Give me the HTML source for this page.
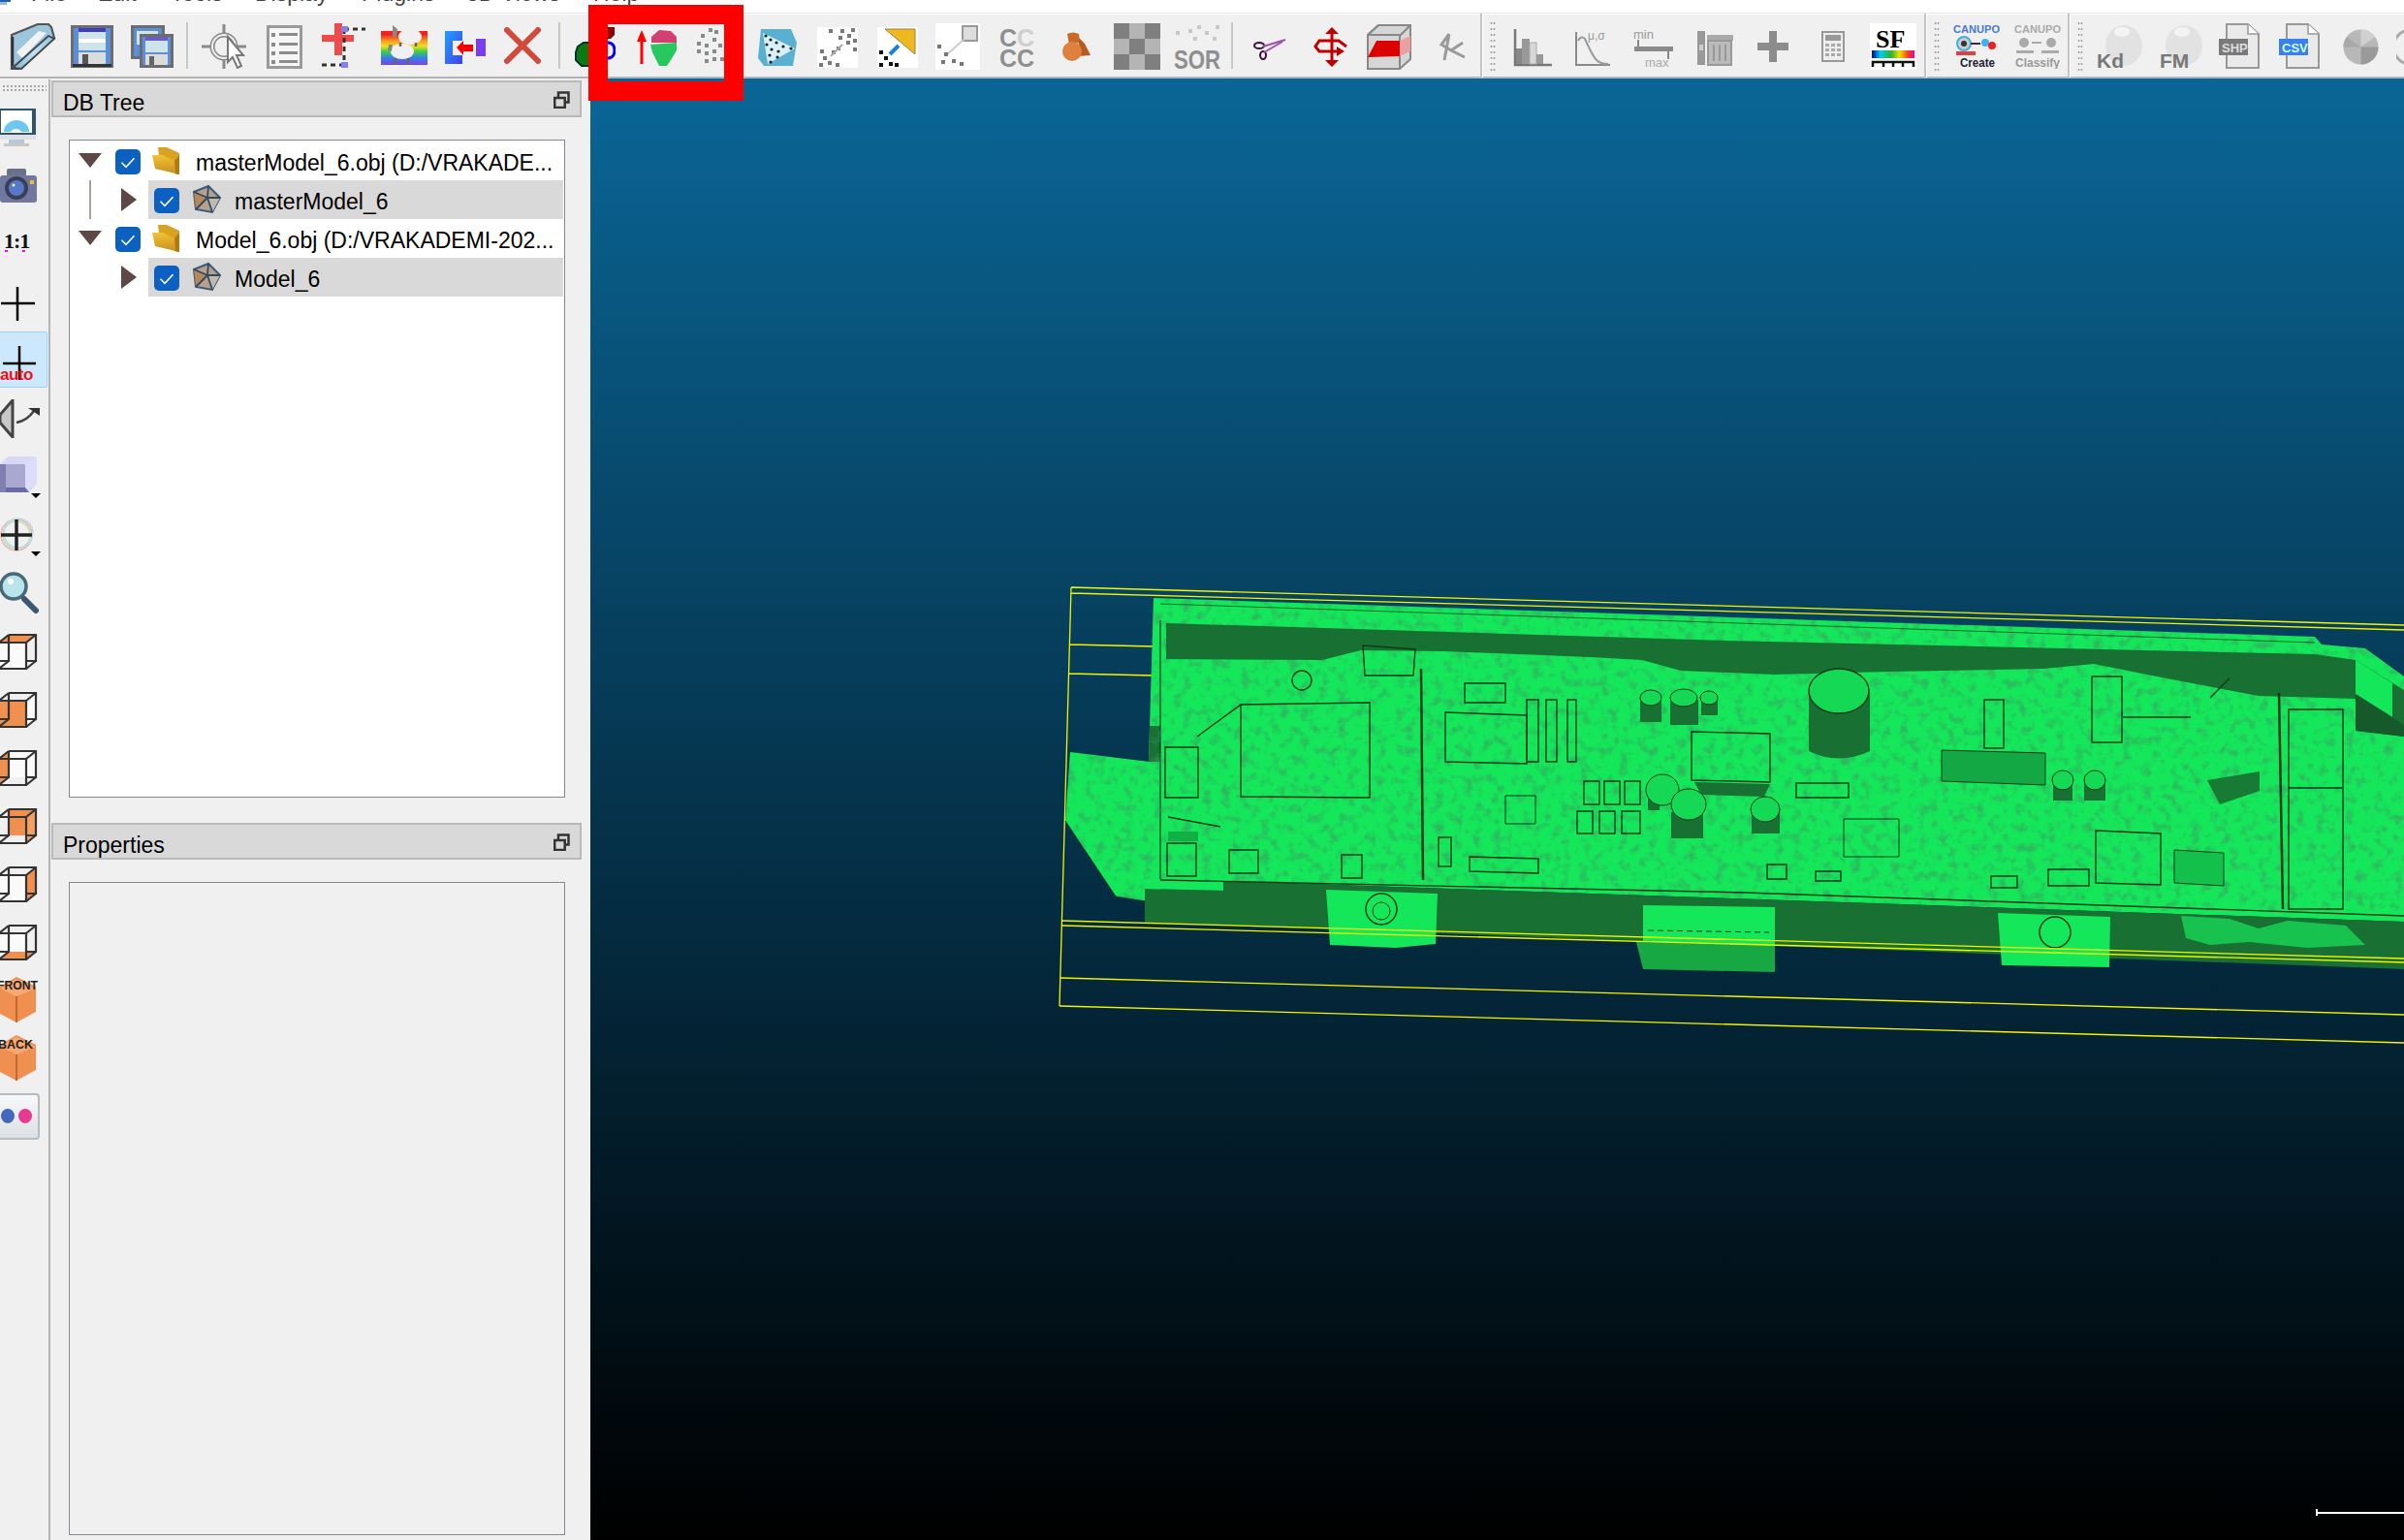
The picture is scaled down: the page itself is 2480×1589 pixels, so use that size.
<!DOCTYPE html>
<html><head><meta charset="utf-8">
<style>
*{margin:0;padding:0;box-sizing:border-box}
html,body{width:2480px;height:1589px;overflow:hidden;background:#f0f0f0;font-family:"Liberation Sans",sans-serif}
.a{position:absolute}
#menu{left:0;top:0;width:2480px;height:13px;background:#fff;overflow:hidden}
#menu span{position:absolute;top:-18px;font-size:23px;color:#444;line-height:23px}
#tb{left:0;top:13px;width:2480px;height:68px;background:#f0f0f0;border-top:1px solid #e6e6e6;box-shadow:inset 0 1px 0 #fff}
#tbline{left:0;top:79px;width:2480px;height:2px;background:#b4b4b4}
.sep{position:absolute;width:2px;background:#c8c8c8}
.tsep{position:absolute;width:3px;top:14px;height:66px;background:#c4c4c4;border-right:1px solid #fff}
.handle{position:absolute;width:6px;top:21px;height:53px;background-image:radial-gradient(circle,#a0a0a0 0.9px,transparent 1.2px);background-size:3px 6px}
#lsep{left:50px;top:82px;width:2px;height:1507px;background:#b4b4b4}
.dock{position:absolute;left:53px;width:547px;height:38px;background:#d9d9d9;border:2px solid #b9b9b9;font-size:23px;line-height:34px;padding-left:10px;padding-top:4px;color:#000}
.float{position:absolute;right:10px;top:9px;width:17px;height:18px}
#tree{left:71px;top:144px;width:512px;height:679px;background:#fff;border:1px solid #828790}
#props{left:71px;top:910px;width:512px;height:674px;background:#f0f0f0;border:1px solid #828790}
.row{position:absolute;left:0;width:510px;height:40px;font-size:23px;line-height:40px;white-space:nowrap}
.sel{position:absolute;left:82px;width:428px;height:39px;background:#d9d9d9}
.cb{position:absolute;width:26px;height:26px;border-radius:5px;background:#0c61c0}
.cb svg{position:absolute;left:0;top:0}
#view{left:609px;top:81px;width:1871px;height:1508px;background:linear-gradient(#0a6697,#000);overflow:hidden}
#redbox{left:607px;top:5px;width:160px;height:99px;border:20px solid #ff0000}
.tt{font-size:23px;line-height:40px;white-space:nowrap;color:#000}
</style></head>
<body>
<div id="menu" class="a">
<i style="position:absolute;left:0;top:0;width:11px;height:2px;background:#1a5fb0"></i><i style="position:absolute;left:0;top:2px;width:7px;height:3px;background:#9ab8d8"></i><span style="left:32px">File</span><span style="left:101px">Edit</span><span style="left:176px">Tools</span><span style="left:263px">Display</span><span style="left:373px">Plugins</span><span style="left:481px">3D Views</span><span style="left:612px">Help</span>
</div>
<div id="tb" class="a"></div>
<div id="tbline" class="a"></div>
<!-- separators -->
<div class="sep" style="left:192px;top:23px;height:48px"></div>
<div class="sep" style="left:576px;top:23px;height:48px"></div>
<div class="sep" style="left:1270px;top:23px;height:48px"></div>
<div class="tsep" style="left:1527px"></div>
<div class="handle" style="left:1537px"></div>
<div class="tsep" style="left:1985px"></div>
<div class="handle" style="left:1995px"></div>
<div class="tsep" style="left:2133px"></div>
<div class="handle" style="left:2143px"></div>
<!-- 1 open -->
<svg class="a" style="left:10px;top:24px" width="48" height="48" viewBox="0 0 48 48">
<defs><linearGradient id="ob" x1="0" y1="1" x2="1" y2="0"><stop offset="0" stop-color="#7fb4d4"/><stop offset="0.5" stop-color="#bfe2f4"/><stop offset="1" stop-color="#8fc0dc"/></linearGradient></defs>
<path d="M2 12L29 1H40L43 4L46 15L9 47H2Z" fill="#9cc6de" stroke="#555" stroke-width="2.2"/>
<path d="M7 30L30 8L38 10L13 36Z" fill="#f2f2f2"/>
<path d="M3 46L40 13L46 16L12 47Z" fill="url(#ob)" stroke="#444" stroke-width="1.8"/>
<path d="M3 14V44" stroke="#333" stroke-width="2.5"/>
</svg>
<!-- 2 save -->
<svg class="a" style="left:73px;top:26px" width="44" height="44" viewBox="0 0 44 44">
<rect x="1.5" y="1.5" width="41" height="41" fill="#5a8fdc" stroke="#6d6d6d" stroke-width="3"/>
<rect x="8" y="3" width="28" height="4" fill="#3d3bc8"/>
<rect x="8" y="7" width="28" height="19" fill="#cfe4e8"/>
<rect x="8" y="14" width="28" height="4" fill="#fff"/>
<rect x="8" y="28" width="28" height="13" fill="#dcdcdc"/>
<rect x="12" y="30" width="6" height="11" fill="#555"/>
<rect x="2" y="40" width="40" height="3" fill="#333"/>
</svg>
<!-- 3 save all -->
<svg class="a" style="left:135px;top:26px" width="44" height="44" viewBox="0 0 44 44">
<rect x="1.5" y="1.5" width="32" height="32" fill="#5a8fdc" stroke="#6d6d6d" stroke-width="3"/>
<rect x="6" y="6" width="22" height="14" fill="#cfe4e8"/>
<rect x="10.5" y="10.5" width="32" height="32" fill="#5a8fdc" stroke="#6d6d6d" stroke-width="3"/>
<rect x="15" y="12" width="23" height="4" fill="#6b5cc8"/>
<rect x="15" y="16" width="23" height="12" fill="#cfe4e8"/>
<rect x="15" y="30" width="23" height="11" fill="#dcdcdc"/>
<rect x="19" y="32" width="5" height="9" fill="#666"/>
</svg>
<!-- 5 point pick -->
<svg class="a" style="left:207px;top:24px" width="48" height="48" viewBox="0 0 48 48">
<g fill="none" stroke="#8a8a8a" stroke-width="3">
<path d="M24 1V12M24 36V47M1 24H12M36 24H47"/><circle cx="24" cy="24" r="12" stroke-width="5"/>
</g>
<circle cx="24" cy="24" r="12" fill="none" stroke="#eee" stroke-width="2"/>
<path d="M28 14L28 40L33 35L38 46L42 44L37 33L44 33Z" fill="#fff" stroke="#777" stroke-width="2"/>
</svg>
<!-- 6 list -->
<svg class="a" style="left:275px;top:26px" width="37" height="45" viewBox="0 0 37 45">
<rect x="1.5" y="1.5" width="34" height="42" fill="#f6f6f6" stroke="#9a9a9a" stroke-width="3"/>
<g fill="#8c8c8c"><rect x="5" y="8" width="4" height="4"/><rect x="13" y="8" width="19" height="3"/><rect x="5" y="18" width="4" height="4"/><rect x="13" y="18" width="19" height="3"/><rect x="5" y="27" width="4" height="4"/><rect x="13" y="27" width="19" height="3"/><rect x="5" y="36" width="4" height="4"/><rect x="13" y="36" width="19" height="3"/></g>
</svg>
<!-- 7 red plus -->
<svg class="a" style="left:331px;top:23px" width="48" height="49" viewBox="0 0 48 49">
<path d="M14 1H22V13H34V20H22V34H14V20H1V13H14Z" fill="#f04a4a"/>
<g fill="none" stroke="#333" stroke-width="3" stroke-dasharray="5 4"><path d="M24 7H46M24 7V44M24 44H1"/></g>
<rect x="21" y="4" width="7" height="6" fill="#8080f0"/><rect x="21" y="41" width="7" height="6" fill="#8080f0"/>
</svg>
<!-- 8 rainbow sheep -->
<svg class="a" style="left:393px;top:26px" width="48" height="42" viewBox="0 0 48 42">
<defs><linearGradient id="rb" x1="0" y1="0" x2="0" y2="1"><stop offset="0.1" stop-color="#f02020"/><stop offset="0.3" stop-color="#f8a020"/><stop offset="0.45" stop-color="#f0e020"/><stop offset="0.6" stop-color="#40d040"/><stop offset="0.8" stop-color="#3080f0"/><stop offset="1" stop-color="#8040e0"/></linearGradient></defs>
<rect x="0" y="6" width="48" height="35" fill="url(#rb)"/>
<ellipse cx="30" cy="12" rx="12" ry="8" fill="#f0f0f0"/><ellipse cx="22" cy="27" rx="12" ry="8" fill="#f0f0f0"/>
<path d="M12 0L17 4L16 12L12 12Z" fill="#888"/><path d="M8 20L12 20L11 27L7 26Z" fill="#888"/>
<path d="M15 34V41M28 34V41M20 18V22M36 18V22" stroke="#666" stroke-width="2.5"/>
</svg>
<!-- 9 merge -->
<svg class="a" style="left:459px;top:32px" width="43" height="35" viewBox="0 0 43 35">
<defs><linearGradient id="mg" x1="0" y1="0" x2="1" y2="1"><stop offset="0" stop-color="#20a0ff"/><stop offset="1" stop-color="#4040f0"/></linearGradient></defs>
<path d="M0 0H18V10H8V25H18V34H0Z" fill="url(#mg)"/>
<rect x="32" y="8" width="10" height="18" fill="#7a3ef0"/>
<path d="M12 17L19 10V14H29V21H19V25Z" fill="#f00"/>
</svg>
<!-- 10 red X -->
<svg class="a" style="left:520px;top:28px" width="38" height="38" viewBox="0 0 38 38">
<path d="M3 3L35 35M35 3L3 35" stroke="#d24a3c" stroke-width="6" stroke-linecap="round"/>
</svg>
<!-- 12 partially hidden icons -->
<svg class="a" style="left:588px;top:30px" width="20" height="40" viewBox="0 0 20 40"><path d="M8 18L14 14L20 14L20 38L12 38L6 32L6 24Z" fill="#0a7a10" stroke="#033" stroke-width="2"/></svg>
<svg class="a" style="left:627px;top:28px" width="8" height="34" viewBox="0 0 8 34"><path d="M0 0H7V8L3 12H0Z" fill="#8a0000"/><path d="M0 16C5 16 7 20 7 24C7 28 5 32 0 32" fill="none" stroke="#0000ff" stroke-width="3"/></svg>
<svg class="a" style="left:656px;top:31px" width="12" height="36" viewBox="0 0 12 36"><path d="M6 0L11 12H7.5V35H4.5V12H1Z" fill="#ff0000"/></svg>
<svg class="a" style="left:670px;top:30px" width="30" height="38" viewBox="0 0 30 38"><path d="M2 8L10 1L22 2L28 8L28 14L2 14Z" fill="#d04070"/><path d="M1 16L28 14L28 22L22 32L18 38L10 38L3 24Z" fill="#28c860"/></svg>
<svg class="a" style="left:719px;top:29px" width="28" height="38" viewBox="0 0 28 38"><g fill="#8a8a8a"><rect x="12" y="0" width="4" height="4"/><rect x="18" y="2" width="4" height="4"/><rect x="4" y="6" width="4" height="4"/><rect x="16" y="10" width="4" height="4"/><rect x="0" y="14" width="4" height="4"/><rect x="8" y="16" width="4" height="4"/><rect x="22" y="16" width="4" height="4"/><rect x="0" y="22" width="4" height="4"/><rect x="16" y="22" width="4" height="4"/><rect x="8" y="24" width="4" height="4"/><rect x="16" y="30" width="4" height="4"/><rect x="8" y="32" width="4" height="4"/><rect x="24" y="30" width="4" height="4"/></g></svg>
<!-- 13 blue triangle -->
<svg class="a" style="left:782px;top:30px" width="41" height="39" viewBox="0 0 41 39">
<path d="M3 0H34L40 14L36 38H6L0 30Z" fill="#5ab0d0"/>
<path d="M5 4L38 20L10 36Z" fill="#d8f0f8"/>
<g fill="#222"><circle cx="8" cy="7" r="1.6"/><circle cx="13" cy="11" r="1.6"/><circle cx="9" cy="16" r="1.6"/><circle cx="19" cy="14" r="1.6"/><circle cx="26" cy="18" r="1.6"/><circle cx="34" cy="20" r="1.6"/><circle cx="14" cy="21" r="1.6"/><circle cx="21" cy="23" r="1.6"/><circle cx="12" cy="27" r="1.6"/><circle cx="20" cy="29" r="1.6"/><circle cx="13" cy="34" r="1.6"/></g>
</svg>
<!-- 14 scatter -->
<svg class="a" style="left:843px;top:28px" width="42" height="42" viewBox="0 0 42 42">
<rect width="42" height="42" fill="#fff"/>
<g fill="#7a7a7a"><rect x="12" y="2" width="4" height="4"/><rect x="24" y="2" width="4" height="4"/><rect x="35" y="1" width="4" height="4"/><rect x="22" y="9" width="4" height="4"/><rect x="31" y="7" width="4" height="4"/><rect x="37" y="12" width="4" height="4"/><rect x="30" y="14" width="4" height="4"/><rect x="37" y="21" width="4" height="4"/><rect x="20" y="20" width="4" height="4"/><rect x="3" y="23" width="4" height="4"/><rect x="15" y="24" width="4" height="4"/><rect x="6" y="30" width="4" height="4"/><rect x="11" y="35" width="4" height="4"/><rect x="2" y="37" width="4" height="4"/><rect x="19" y="37" width="4" height="4"/></g>
<path d="M14 30L26 18" stroke="#aaa" stroke-width="2"/>
</svg>
<!-- 15 scatter yellow -->
<svg class="a" style="left:905px;top:28px" width="42" height="42" viewBox="0 0 42 42">
<rect width="42" height="42" fill="#fff"/>
<path d="M8 2H39V28Z" fill="#f0b820" stroke="#a08040" stroke-width="1"/>
<g fill="#111"><rect x="2" y="24" width="4" height="4"/><rect x="7" y="30" width="4" height="4"/><rect x="12" y="36" width="4" height="4"/><rect x="2" y="37" width="4" height="4"/><rect x="18" y="37" width="4" height="4"/></g>
<path d="M13 28L22 19" stroke="#1a80e0" stroke-width="4"/>
</svg>
<!-- 16 scatter box -->
<svg class="a" style="left:965px;top:24px" width="46" height="48" viewBox="0 0 46 48">
<rect width="46" height="48" fill="#fff"/>
<rect x="28" y="3" width="15" height="15" fill="#ddd" stroke="#999" stroke-width="2"/>
<path d="M10 34L30 16" stroke="#ccc" stroke-width="2"/>
<g fill="#777"><rect x="2" y="22" width="4" height="4"/><rect x="9" y="30" width="4" height="4"/><rect x="6" y="38" width="4" height="4"/><rect x="17" y="37" width="4" height="4"/><rect x="25" y="40" width="4" height="4"/></g>
</svg>
<!-- 17 CC CC -->
<svg class="a" style="left:1031px;top:29px" width="36" height="41" viewBox="0 0 36 41">
<g font-family="Liberation Sans" font-weight="bold" font-size="25">
<text x="0" y="19" fill="#8f8f8f">C</text><text x="18" y="19" fill="#cfcfcf">C</text>
<text x="0" y="40" fill="#8f8f8f">C</text><text x="18" y="40" fill="#8f8f8f">C</text></g>
</svg>
<!-- 18 orange shapes -->
<svg class="a" style="left:1095px;top:32px" width="31" height="32" viewBox="0 0 31 32">
<path d="M6 3Q12 0 18 3L19 12L8 14Z" fill="#c86a28"/>
<path d="M18 7L24 13L30 25L18 26Z" fill="#b85a20"/>
<circle cx="11" cy="21" r="10" fill="#e08040"/>
</svg>
<!-- 19 checker -->
<svg class="a" style="left:1149px;top:24px" width="48" height="48" viewBox="0 0 48 48">
<rect width="48" height="48" fill="#b4b4b4"/>
<g fill="#7f7f7f"><rect x="0" y="0" width="16" height="16"/><rect x="32" y="0" width="16" height="16"/><rect x="16" y="16" width="16" height="16"/><rect x="0" y="32" width="16" height="16"/><rect x="32" y="32" width="16" height="16"/></g>
</svg>
<!-- 20 SOR -->
<svg class="a" style="left:1211px;top:24px" width="49" height="48" viewBox="0 0 49 48">
<g fill="#c8c8c8"><rect x="24" y="2" width="4" height="4"/><rect x="43" y="2" width="4" height="4"/><rect x="2" y="8" width="4" height="4"/><rect x="15" y="6" width="4" height="4"/><rect x="32" y="8" width="4" height="4"/><rect x="20" y="14" width="4" height="4"/><rect x="40" y="14" width="4" height="4"/></g>
<text x="0" y="47" font-family="Liberation Sans" font-weight="bold" font-size="28" fill="#8f8f8f" textLength="48" lengthAdjust="spacingAndGlyphs">SOR</text>
</svg>
<!-- 22 scissors -->
<svg class="a" style="left:1293px;top:37px" width="34" height="25" viewBox="0 0 34 25">
<ellipse cx="6" cy="10" rx="5" ry="3" fill="none" stroke="#3a1040" stroke-width="2"/><ellipse cx="10" cy="20" rx="3" ry="4" fill="none" stroke="#3a1040" stroke-width="2"/>
<path d="M10 11L33 4M11 17L30 6" stroke="#a050b0" stroke-width="2"/>
</svg>
<!-- 23 red rotate -->
<svg class="a" style="left:1355px;top:28px" width="37" height="41" viewBox="0 0 37 41">
<g fill="none" stroke="#c00000" stroke-width="3"><path d="M19 2V39"/><path d="M34 20L26 14H6L2 20L6 25H26"/></g>
<path d="M19 0L26 7H12ZM19 41L26 34H12ZM24 20L32 25L24 30Z" fill="#c00000"/>
</svg>
<!-- 24 box red plane -->
<svg class="a" style="left:1410px;top:25px" width="46" height="47" viewBox="0 0 46 47">
<path d="M12 1H45V36L34 46H1V11Z" fill="#d6d6d6" stroke="#888" stroke-width="2"/>
<path d="M1 11L12 1M34 12L45 1M34 12V46M1 11H34" fill="none" stroke="#888" stroke-width="2"/>
<path d="M1 34L10 17H34L34 33Z" fill="#dd0000"/>
<path d="M34 17L45 12V28L34 33Z" fill="#e8a0a0"/>
</svg>
<!-- 25 gray compass -->
<svg class="a" style="left:1483px;top:34px" width="29" height="30" viewBox="0 0 29 30">
<path d="M12 1L7 28M12 1L4 12L14 18L28 25M14 18L26 10" fill="none" stroke="#9a9a9a" stroke-width="3"/>
</svg>
<!-- 28 histogram -->
<svg class="a" style="left:1561px;top:30px" width="41" height="39" viewBox="0 0 41 39">
<path d="M2 0V37H40" fill="none" stroke="#777" stroke-width="2.5"/>
<rect x="3" y="20" width="6" height="16" fill="#888"/><rect x="9" y="10" width="8" height="26" fill="#999"/><rect x="17" y="14" width="7" height="22" fill="#d8d8d8" stroke="#aaa"/><rect x="24" y="26" width="7" height="10" fill="#999"/>
</svg>
<!-- 29 gaussian -->
<svg class="a" style="left:1625px;top:30px" width="39" height="39" viewBox="0 0 39 39">
<path d="M1 3V37H36" fill="none" stroke="#8a8a8a" stroke-width="2"/>
<path d="M3 12Q6 6 10 10Q18 28 22 32Q26 36 34 36" fill="none" stroke="#9a9a9a" stroke-width="2"/>
<text x="13" y="11" font-family="Liberation Sans" font-size="12" fill="#9a9a9a">μ,σ</text>
</svg>
<!-- 30 min max -->
<svg class="a" style="left:1685px;top:29px" width="42" height="41" viewBox="0 0 42 41">
<text x="0" y="11" font-family="Liberation Sans" font-size="13" fill="#999">min</text>
<text x="12" y="40" font-family="Liberation Sans" font-size="13" fill="#aaa">max</text>
<path d="M5 12V20M36 19V32" stroke="#888" stroke-width="2"/>
<rect x="1" y="19" width="40" height="5" fill="#8a8a8a"/>
</svg>
<!-- 31 trash -->
<svg class="a" style="left:1751px;top:32px" width="38" height="36" viewBox="0 0 38 36">
<rect x="0" y="0" width="8" height="35" fill="#999"/><rect x="2" y="14" width="4" height="6" fill="#ccc"/>
<rect x="10" y="4" width="27" height="6" fill="#aaa"/><rect x="11" y="10" width="24" height="25" fill="#bbb" stroke="#999" stroke-width="2"/>
<path d="M17 14V31M23 14V31M29 14V31" stroke="#999" stroke-width="2"/>
</svg>
<!-- 32 plus -->
<svg class="a" style="left:1813px;top:32px" width="32" height="32" viewBox="0 0 32 32"><path d="M12 0H20V12H32V20H20V32H12V20H0V12H12Z" fill="#8c8c8c"/></svg>
<!-- 33 calculator -->
<svg class="a" style="left:1879px;top:32px" width="24" height="32" viewBox="0 0 24 32">
<rect x="1" y="1" width="22" height="30" fill="#eee" stroke="#999" stroke-width="2"/><rect x="4" y="4" width="16" height="6" fill="#999"/>
<g fill="#aaa"><rect x="4" y="13" width="4" height="3"/><rect x="10" y="13" width="4" height="3"/><rect x="16" y="13" width="4" height="3"/><rect x="4" y="18" width="4" height="3"/><rect x="10" y="18" width="4" height="3"/><rect x="16" y="18" width="4" height="3"/><rect x="4" y="23" width="4" height="3"/><rect x="10" y="23" width="4" height="3"/><rect x="16" y="23" width="4" height="3"/></g>
</svg>
<!-- 34 SF -->
<svg class="a" style="left:1929px;top:24px" width="48" height="48" viewBox="0 0 48 48">
<defs><linearGradient id="sfg" x1="0" x2="1"><stop offset="0" stop-color="#0000a0"/><stop offset="0.2" stop-color="#00d0f0"/><stop offset="0.45" stop-color="#30b030"/><stop offset="0.65" stop-color="#f0e000"/><stop offset="0.85" stop-color="#f04020"/><stop offset="1" stop-color="#f000a0"/></linearGradient></defs>
<rect width="48" height="48" fill="#fff"/>
<text x="6" y="25" font-family="Liberation Serif" font-weight="bold" font-size="26" fill="#000">SF</text>
<rect x="2" y="28" width="44" height="8" fill="url(#sfg)"/>
<path d="M3 45V40H45V45M14 40V45M24 40V45M34 40V45" fill="none" stroke="#111" stroke-width="2.5"/>
</svg>
<!-- 37 canupo create -->
<svg class="a" style="left:2015px;top:25px" width="48" height="45" viewBox="0 0 48 45">
<text x="0" y="9" font-family="Liberation Sans" font-weight="bold" font-size="10" fill="#4a78d0" textLength="48" lengthAdjust="spacingAndGlyphs">CANUPO</text>
<circle cx="11" cy="20" r="7" fill="#ccc" stroke="#40b0e0" stroke-width="2"/><circle cx="11" cy="20" r="3" fill="#333"/>
<path d="M18 20H28" stroke="#333" stroke-width="2"/><circle cx="33" cy="19" r="4" fill="#40b0f0"/><circle cx="40" cy="22" r="4" fill="#f02020"/>
<rect x="3" y="28" width="20" height="4" fill="#e04040"/>
<text x="7" y="44" font-family="Liberation Sans" font-weight="bold" font-size="12" fill="#223" textLength="36" lengthAdjust="spacingAndGlyphs">Create</text>
</svg>
<!-- 38 canupo classify -->
<svg class="a" style="left:2078px;top:25px" width="48" height="46" viewBox="0 0 48 46">
<text x="0" y="9" font-family="Liberation Sans" font-weight="bold" font-size="10" fill="#aaa" textLength="48" lengthAdjust="spacingAndGlyphs">CANUPO</text>
<g fill="#aaa"><circle cx="10" cy="19" r="5"/><rect x="18" y="18" width="10" height="2"/><circle cx="38" cy="19" r="5"/><rect x="2" y="27" width="18" height="3"/><rect x="28" y="27" width="18" height="3"/></g>
<text x="1" y="44" font-family="Liberation Sans" font-weight="bold" font-size="12" fill="#999" textLength="46" lengthAdjust="spacingAndGlyphs">Classify</text>
</svg>
<!-- 41 Kd -->
<svg class="a" style="left:2163px;top:25px" width="48" height="46" viewBox="0 0 48 46">
<ellipse cx="28" cy="22" rx="19" ry="21" fill="#e2e2e2"/><ellipse cx="26" cy="8" rx="8" ry="5" fill="#f4f4f4"/>
<text x="0" y="45" font-family="Liberation Sans" font-weight="bold" font-size="21" fill="#777">Kd</text>
</svg>
<!-- 42 FM -->
<svg class="a" style="left:2225px;top:25px" width="48" height="46" viewBox="0 0 48 46">
<ellipse cx="28" cy="22" rx="19" ry="21" fill="#e2e2e2"/><ellipse cx="26" cy="8" rx="8" ry="5" fill="#f4f4f4"/>
<text x="3" y="45" font-family="Liberation Sans" font-weight="bold" font-size="21" fill="#777">FM</text>
</svg>
<!-- 43 SHP -->
<svg class="a" style="left:2289px;top:24px" width="43" height="47" viewBox="0 0 43 47">
<path d="M8 1H30L41 11V46H8Z" fill="#eaeaea" stroke="#999" stroke-width="2"/><path d="M30 1V11H41" fill="#fff" stroke="#999" stroke-width="1.5"/>
<rect x="0" y="16" width="30" height="17" fill="#7a7a7a"/><text x="3" y="30" font-family="Liberation Sans" font-weight="bold" font-size="13" fill="#ddd">SHP</text>
</svg>
<!-- 44 CSV -->
<svg class="a" style="left:2351px;top:24px" width="43" height="47" viewBox="0 0 43 47">
<path d="M8 1H30L41 11V46H8Z" fill="#eaeaea" stroke="#999" stroke-width="2"/><path d="M30 1V11H41" fill="#fff" stroke="#999" stroke-width="1.5"/>
<rect x="0" y="16" width="30" height="17" fill="#3a80f0"/><text x="3" y="30" font-family="Liberation Sans" font-weight="bold" font-size="13" fill="#cfe">CSV</text>
</svg>
<!-- 45 pie -->
<svg class="a" style="left:2417px;top:30px" width="37" height="37" viewBox="0 0 37 37">
<circle cx="18.5" cy="18.5" r="18" fill="#b8b8b8"/><path d="M18.5 18.5L18.5 0.5A18 18 0 0 1 33 8Z" fill="#d0d0d0"/><path d="M18.5 18.5L36.5 18.5A18 18 0 0 1 18.5 36.5Z" fill="#9a9a9a"/><path d="M18.5 18.5L4 8A18 18 0 0 0 0.5 18.5Z" fill="#a8a8a8"/>
</svg>
<svg class="a" style="left:2472px;top:30px" width="8" height="37" viewBox="0 0 8 37"><path d="M8 2A18 18 0 0 0 8 35" fill="none" stroke="#aaa" stroke-width="3"/></svg>


<!-- left side -->
<div id="lsep" class="a"></div>
<div class="a" style="left:0;top:81px;width:50px;height:1px;background:#fafafa"></div>
<div class="a" style="left:2px;top:87px;width:46px;height:8px;background-image:radial-gradient(circle,#a8a8a8 0.8px,transparent 1.1px);background-size:4px 4px"></div>
<!-- monitor -->
<svg class="a" style="left:0;top:112px" width="38" height="40" viewBox="0 0 38 40">
<rect x="0" y="0" width="37" height="27" fill="#2e5470"/><rect x="1" y="2" width="32" height="23" fill="#fff"/>
<path d="M4 24A13 12 0 0 1 30 24Z" fill="#6cc8f0"/><path d="M11 24A6 5 0 0 1 22 24Z" fill="#fff"/>
<rect x="0" y="27" width="37" height="5" fill="#dde2e6"/><rect x="9" y="32" width="16" height="4" fill="#b8c8d4"/><rect x="4" y="36" width="26" height="3" fill="#c8c8c8"/>
</svg>
<!-- camera -->
<svg class="a" style="left:0;top:174px" width="40" height="36" viewBox="0 0 40 36">
<rect x="7" y="0" width="20" height="8" rx="2" fill="#6a7088"/><rect x="0" y="7" width="38" height="28" rx="3" fill="#7078a0"/>
<circle cx="17" cy="20" r="12" fill="#3a3f58"/><circle cx="17" cy="20" r="8" fill="#5a78c8"/><circle cx="14" cy="17" r="1.5" fill="#eee"/>
<rect x="31" y="12" width="4" height="4" fill="#e8c030"/>
</svg>
<!-- 1:1 -->
<div class="a" style="left:4px;top:236px;font-family:'Liberation Serif';font-weight:bold;font-size:22px;color:#111;letter-spacing:-1px">1:1</div>
<div class="a" style="left:5px;top:258px;width:3px;height:2px;background:#f0f"></div><div class="a" style="left:23px;top:258px;width:3px;height:2px;background:#f0f"></div>
<!-- cross -->
<svg class="a" style="left:1px;top:296px" width="35" height="35" viewBox="0 0 35 35"><path d="M17 0V35M0 17H35" stroke="#000" stroke-width="2.5"/></svg>
<!-- auto -->
<div class="a" style="left:0;top:342px;width:49px;height:58px;background:#cce8ff;border:1px solid #99d1ff;border-left:none;border-radius:0 3px 3px 0"></div>
<svg class="a" style="left:2px;top:357px" width="36" height="35" viewBox="0 0 36 35"><path d="M18 0V35M1 18H35" stroke="#000" stroke-width="2.5"/></svg>
<div class="a" style="left:0;top:377px;font-family:'Liberation Sans';font-weight:bold;font-size:17px;line-height:20px;color:#f01010;letter-spacing:-0.5px">auto</div>
<!-- perspective -->
<svg class="a" style="left:0;top:412px" width="42" height="40" viewBox="0 0 42 40">
<path d="M13 1V39L0 24V16Z" fill="#c8c8c8" stroke="#444" stroke-width="3"/>
<path d="M17 24Q28 22 35 12" fill="none" stroke="#444" stroke-width="2.5"/><path d="M29 9H41V17Z" fill="#333"/>
</svg>
<!-- purple cube -->
<svg class="a" style="left:0;top:471px" width="42" height="44" viewBox="0 0 42 44">
<path d="M0 8L8 0H38V28L30 37H0Z" fill="#d8d8f8"/><path d="M0 8H26V37H0Z" fill="#a8a8d0"/><path d="M26 8L38 0V28L26 37Z" fill="#dcdcfc"/><path d="M0 32H26L30 37H0Z" fill="#6a6aa8"/><path d="M0 8H6V37H0Z" fill="#8080b0"/>
<path d="M32 38H42L37 43Z" fill="#000"/>
</svg>
<!-- rotation -->
<svg class="a" style="left:0;top:532px" width="42" height="43" viewBox="0 0 42 43">
<circle cx="17" cy="20" r="16" fill="none" stroke="#f0b0b0" stroke-width="1.5"/><circle cx="17" cy="20" r="14" fill="none" stroke="#b0e8b0" stroke-width="1.5"/><circle cx="19" cy="18" r="15" fill="none" stroke="#c0d8f0" stroke-width="1.5"/>
<path d="M17 4V36M1 20H33" stroke="#222" stroke-width="3.5"/>
<path d="M32 37H42L37 42Z" fill="#000"/>
</svg>
<!-- magnifier -->
<svg class="a" style="left:0;top:589px" width="40" height="46" viewBox="0 0 40 46">
<circle cx="14" cy="16" r="13" fill="#b8e4ec" stroke="#4a6878" stroke-width="3.5"/><circle cx="11" cy="11" r="3" fill="#fff"/>
<path d="M25 29L37 41" stroke="#3a5870" stroke-width="6" stroke-linecap="round"/>
</svg>
<!-- view cubes -->
<svg class="a" style="left:0;top:654px" width="40" height="38" viewBox="0 0 40 38">
<path d="M-1 9L9 1H37L27 9Z" fill="#f09050"/><rect x="0" y="9" width="27" height="27" fill="#fafafa"/>
<g fill="none" stroke="#333" stroke-width="2.2"><path d="M-1 9H27V36H-1"/><path d="M9 1H37V28H27M9 1V28H-1M-1 9L9 1M27 9L37 1M27 36L37 28M-1 36L9 28"/></g>
</svg>
<svg class="a" style="left:0;top:714px" width="40" height="38" viewBox="0 0 40 38">
<rect x="-1" y="9" width="28" height="27" fill="#f09050"/><path d="M27 9L37 1V28L27 36Z" fill="#fafafa"/>
<g fill="none" stroke="#333" stroke-width="2.2"><path d="M-1 9H27V36H-1"/><path d="M9 1H37V28H27M9 1V28H-1M-1 9L9 1M27 9L37 1M27 36L37 28M-1 36L9 28"/></g>
</svg>
<svg class="a" style="left:0;top:774px" width="40" height="38" viewBox="0 0 40 38">
<path d="M-1 9L9 1V28L-1 36Z" fill="#f09050"/><rect x="9" y="1" width="28" height="27" fill="#fafafa"/>
<g fill="none" stroke="#333" stroke-width="2.2"><path d="M-1 9H27V36H-1"/><path d="M9 1H37V28H27M9 1V28H-1M-1 9L9 1M27 9L37 1M27 36L37 28M-1 36L9 28"/></g>
</svg>
<svg class="a" style="left:0;top:834px" width="40" height="38" viewBox="0 0 40 38">
<rect x="9" y="1" width="28" height="27" fill="#f09050"/><path d="M27 9L37 1V28L27 36Z" fill="#f4a060"/>
<g fill="none" stroke="#333" stroke-width="2.2"><path d="M-1 9H27V36H-1"/><path d="M9 1H37V28H27M9 1V28H-1M-1 9L9 1M27 9L37 1M27 36L37 28M-1 36L9 28"/></g>
</svg>
<svg class="a" style="left:0;top:894px" width="40" height="38" viewBox="0 0 40 38">
<rect x="0" y="9" width="27" height="27" fill="#fafafa"/><path d="M27 9L37 1V28L27 36Z" fill="#f09050"/>
<g fill="none" stroke="#333" stroke-width="2.2"><path d="M-1 9H27V36H-1"/><path d="M9 1H37V28H27M9 1V28H-1M-1 9L9 1M27 9L37 1M27 36L37 28M-1 36L9 28"/></g>
</svg>
<svg class="a" style="left:0;top:954px" width="40" height="38" viewBox="0 0 40 38">
<rect x="0" y="9" width="27" height="27" fill="#fafafa"/><path d="M-1 36L9 28H37L27 36Z" fill="#f09050"/>
<g fill="none" stroke="#333" stroke-width="2.2"><path d="M-1 9H27V36H-1"/><path d="M9 1H37V28H27M9 1V28H-1M-1 9L9 1M27 9L37 1M27 36L37 28M-1 36L9 28"/></g>
</svg>
<!-- FRONT / BACK iso -->
<svg class="a" style="left:0;top:1008px" width="40" height="48" viewBox="0 0 40 48">
<path d="M17 0L37 10V36L17 47L0 38V10Z" fill="#f09050"/><path d="M17 20V47" stroke="#c06a30" stroke-width="2"/><path d="M0 12L17 20L37 12L17 2Z" fill="#f8a870"/>
<text x="-3" y="13" font-family="Liberation Sans" font-weight="bold" font-size="12" fill="#222" textLength="42" lengthAdjust="spacingAndGlyphs">FRONT</text>
</svg>
<svg class="a" style="left:0;top:1068px" width="40" height="48" viewBox="0 0 40 48">
<path d="M17 0L37 10V36L17 47L0 38V10Z" fill="#f09050"/><path d="M17 20V47" stroke="#c06a30" stroke-width="2"/><path d="M0 12L17 20L37 12L17 2Z" fill="#f8a870"/>
<text x="-2" y="14" font-family="Liberation Sans" font-weight="bold" font-size="12" fill="#222" textLength="36" lengthAdjust="spacingAndGlyphs">BACK</text>
</svg>
<!-- stereo -->
<div class="a" style="left:-3px;top:1128px;width:44px;height:48px;border:2px solid #b4bcc2;border-radius:4px;background:linear-gradient(#f6f8f9,#dde1e4)"></div>
<div class="a" style="left:1px;top:1144px;width:14px;height:15px;border-radius:50%;background:#4468bc"></div>
<div class="a" style="left:19px;top:1144px;width:14px;height:15px;border-radius:50%;background:#e83a90"></div>


<div class="dock" style="top:83px">DB Tree<svg class="float" viewBox="0 0 17 18"><rect x="5" y="1.5" width="10.5" height="10" fill="none" stroke="#333" stroke-width="2.5"/><rect x="1.2" y="7" width="10.5" height="10" fill="#d9d9d9" stroke="#333" stroke-width="2.5"/></svg></div>

<div id="tree" class="a"></div>
<div class="a" style="left:153px;top:186px;width:428px;height:40px;background:#d9d9d9"></div>
<div class="a" style="left:153px;top:266px;width:428px;height:40px;background:#d9d9d9"></div>
<div class="a" style="left:92px;top:186px;width:2px;height:40px;background:#a8a29c"></div>
<svg class="a" style="left:81px;top:158px" width="24" height="16"><path d="M0 0H24L12 15Z" fill="#5f4747"/></svg>
<svg class="a" style="left:81px;top:238px" width="24" height="16"><path d="M0 0H24L12 15Z" fill="#5f4747"/></svg>
<svg class="a" style="left:125px;top:194px" width="16" height="24"><path d="M0 0V24L16 12Z" fill="#5f4747"/></svg>
<svg class="a" style="left:125px;top:274px" width="16" height="24"><path d="M0 0V24L16 12Z" fill="#5f4747"/></svg>
<div class="cb" style="left:119px;top:154px"><svg width="26" height="26"><path d="M6.5 13.8L11 18.3L19.5 9.2" fill="none" stroke="#fff" stroke-width="1.6"/></svg></div>
<div class="cb" style="left:159px;top:194px"><svg width="26" height="26"><path d="M6.5 13.8L11 18.3L19.5 9.2" fill="none" stroke="#fff" stroke-width="1.6"/></svg></div>
<div class="cb" style="left:119px;top:234px"><svg width="26" height="26"><path d="M6.5 13.8L11 18.3L19.5 9.2" fill="none" stroke="#fff" stroke-width="1.6"/></svg></div>
<div class="cb" style="left:159px;top:274px"><svg width="26" height="26"><path d="M6.5 13.8L11 18.3L19.5 9.2" fill="none" stroke="#fff" stroke-width="1.6"/></svg></div>
<svg class="a" style="left:156px;top:152px" width="31" height="30" viewBox="0 0 31 30"><defs><linearGradient id="fg0" x1="0" y1="0" x2="0" y2="1"><stop offset="0" stop-color="#f3c23a"/><stop offset="1" stop-color="#c8901a"/></linearGradient></defs><path d="M7 0H16L29 6V28L26 28L9 18Z" fill="#d9a222"/><path d="M1 8H12L24 14L25 27L21 26L4 22Z" fill="url(#fg0)"/><path d="M24 14L29 8V28L25 27Z" fill="#b07a12"/></svg>
<svg class="a" style="left:156px;top:232px" width="31" height="30" viewBox="0 0 31 30"><defs><linearGradient id="fg1" x1="0" y1="0" x2="0" y2="1"><stop offset="0" stop-color="#f3c23a"/><stop offset="1" stop-color="#c8901a"/></linearGradient></defs><path d="M7 0H16L29 6V28L26 28L9 18Z" fill="#d9a222"/><path d="M1 8H12L24 14L25 27L21 26L4 22Z" fill="url(#fg1)"/><path d="M24 14L29 8V28L25 27Z" fill="#b07a12"/></svg>
<svg class="a" style="left:199px;top:190px" width="30" height="32" viewBox="0 0 30 32"><path d="M16 2L28 14L20 29L3 26L1 8Z" fill="#b8a08a" stroke="#3a5a78" stroke-width="2"/><path d="M1 8L15 14L3 26Z" fill="#b8875a"/><path d="M15 14L28 14L20 29Z" fill="#c4b8aa"/><path d="M16 2L15 14L28 14M15 14L3 26M15 14L20 29M1 8L15 14" fill="none" stroke="#2f4a62" stroke-width="1.8"/></svg>
<svg class="a" style="left:199px;top:270px" width="30" height="32" viewBox="0 0 30 32"><path d="M16 2L28 14L20 29L3 26L1 8Z" fill="#b8a08a" stroke="#3a5a78" stroke-width="2"/><path d="M1 8L15 14L3 26Z" fill="#b8875a"/><path d="M15 14L28 14L20 29Z" fill="#c4b8aa"/><path d="M16 2L15 14L28 14M15 14L3 26M15 14L20 29M1 8L15 14" fill="none" stroke="#2f4a62" stroke-width="1.8"/></svg>
<div class="a tt" style="left:202px;top:148px">masterModel_6.obj (D:/VRAKADE...</div>
<div class="a tt" style="left:242px;top:188px">masterModel_6</div>
<div class="a tt" style="left:202px;top:228px">Model_6.obj (D:/VRAKADEMI-202...</div>
<div class="a tt" style="left:242px;top:268px">Model_6</div>

<div class="dock" style="top:849px">Properties<svg class="float" viewBox="0 0 17 18"><rect x="5" y="1.5" width="10.5" height="10" fill="none" stroke="#333" stroke-width="2.5"/><rect x="1.2" y="7" width="10.5" height="10" fill="#d9d9d9" stroke="#333" stroke-width="2.5"/></svg></div>
<div id="props" class="a"></div>

<div id="view" class="a"><svg class="a" style="left:0;top:0" width="1871" height="1508" viewBox="609 81 1871 1508">
<g fill="none" stroke="#f4f400" stroke-width="1.3">
<path d="M1105 606L2480 645M1105 612L2480 650M1105 606L1093 1038M1103 665L1190 667M1102 695L1190 697"/>
</g>
<!-- left flap -->
<path d="M1104 776L1186 786L1197 786L1197 918L1182 930L1151 925L1099 847Z" fill="#14e85a"/>
<path d="M1099 847L1151 925L1182 930" fill="none" stroke="#0f3a1c" stroke-width="1"/>
<!-- main board -->
<path d="M1190 617L2388 657L2395 665L2440 669L2480 698L2480 951L1262 909L1262 918L1181 915L1186 750Z" fill="#14e85a"/>
<!-- left edge strip dark lower -->
<path d="M1186 749L1197 749L1197 786L1185 786Z" fill="#187033"/>
<path d="M1197 640L1197 916" stroke="#0f3a1c" stroke-width="1.2"/>

<defs>
<filter id="noise" x="0" y="0" width="100%" height="100%">
<feTurbulence type="fractalNoise" baseFrequency="0.1" numOctaves="3" seed="3" result="t"/>
<feColorMatrix in="t" type="matrix" values="0 0 0 0 0.05  0 0 0 0 0.3  0 0 0 0 0.12  0 0 0 -3 1.55"/>
</filter>
<clipPath id="boardclip"><path d="M1104 776L1190 788L1192 918L1182 930L1151 925L1099 847Z M1190 617L2388 657L2395 665L2440 669L2480 698L2480 951L1262 909L1262 918L1181 915L1186 750Z"/></clipPath>
</defs>
<rect x="1090" y="610" width="1390" height="330" filter="url(#noise)" clip-path="url(#boardclip)" opacity="0.55"/>
<!-- inner dark strip -->
<path d="M1203 643L1780 661L2388 675L2430 681L2480 712L2480 760L2430 754L2430 721L2330 718L2230 699L2160 685L2108 690L1949 693L1830 696L1734 692L1694 681L1640 678L1491 672L1404 671L1364 681L1203 680Z" fill="#187033"/>
<path d="M2430 681L2468 705L2468 740L2430 716Z" fill="#14e85a"/>
<path d="M2430 716L2468 740L2480 748L2480 760L2430 754Z" fill="#165a2b"/>
<!-- dark base -->
<path d="M1181 917L1262 919L1262 909L2480 951L2480 1000L1181 952Z" fill="#187033"/>
<path d="M1181 907L1262 909L1262 919L1181 917Z" fill="#14e85a"/>
<!-- tabs -->
<path d="M1368 918L1483 922L1481 974L1440 978L1372 975Z" fill="#14e85a"/>
<circle cx="1425" cy="938" r="16" fill="none" stroke="#0f3a1c" stroke-width="1.5"/>
<circle cx="1425" cy="940" r="9" fill="none" stroke="#0f3a1c" stroke-width="1"/>
<path d="M2061 942L2177 946L2176 998L2065 996Z" fill="#14e85a"/>
<circle cx="2120" cy="962" r="16" fill="none" stroke="#0f3a1c" stroke-width="1.5"/>
<path d="M1695 934L1831 936L1831 975L1695 972Z" fill="#14e85a"/>
<path d="M1688 972L1831 975L1831 1003L1695 1000Z" fill="#17a844"/>
<path d="M1700 960L1825 962" stroke="#0f3a1c" stroke-width="1" stroke-dasharray="6 4"/>

<g fill="none" stroke="#f4f400" stroke-width="1.3">
<path d="M1096 950L2480 989M1096 955L2480 993M1094 1009L2480 1047M1093 1038L2480 1076"/>
</g>
<g fill="none" stroke="#0f3a1c" stroke-width="1.4">
<!-- board bottom edge -->
<path d="M1197 908L1800 921L2480 945"/>
<!-- relay box -->
<path d="M1280 727L1413 725L1413 823L1280 822Z"/>
<path d="M1235 760L1280 727M1205 843L1259 853" />
<!-- split edge -->
<path d="M1466 690L1468 908" stroke-width="2.5"/>
<path d="M1406 666L1460 670L1458 697L1408 697Z"/>
<circle cx="1343" cy="702" r="10"/>
<path d="M1202 771L1236 771L1236 823L1202 823Z"/>
<path d="M1204 870L1234 870L1234 904L1204 904Z"/>
<path d="M1268 877L1298 877L1298 901L1268 901Z"/>
<path d="M1491 735L1575 738L1575 788L1491 786Z"/>
<path d="M1575 722L1587 722L1587 786L1575 786ZM1595 722L1606 722L1606 786L1595 786ZM1617 722L1626 722L1626 786L1617 786Z"/>
<path d="M1511 705L1553 705L1553 725L1511 725Z"/>
<path d="M1634 806L1650 806L1650 830L1634 830ZM1655 806L1671 806L1671 830L1655 830ZM1676 806L1692 806L1692 830L1676 830Z"/>
<path d="M1627 837L1643 837L1643 860L1627 860ZM1650 837L1666 837L1666 860L1650 860ZM1673 837L1692 837L1692 860L1673 860Z"/>
<path d="M1553 821L1584 821L1584 850L1553 850Z" stroke-width="1"/>
<path d="M1516 884L1587 886L1587 901L1516 899ZM1484 864L1497 864L1497 894L1484 894ZM1384 882L1405 882L1405 906L1384 906Z"/>
<path d="M1745 755L1826 757L1826 807L1745 805Z"/><path d="M1748 807L1826 809L1820 822L1755 820Z" fill="#187033" stroke="none"/>
<path d="M1853 808L1907 808L1907 823L1853 823ZM1823 892L1843 892L1843 907L1823 907ZM1873 899L1899 899L1899 909L1873 909ZM2054 904L2081 904L2081 916L2054 916ZM2113 897L2155 897L2155 914L2113 914Z"/>
<path d="M2047 722L2067 722L2067 772L2047 772Z"/>
<path d="M2158 698L2189 698L2189 766L2158 766Z"/>
<path d="M1902 845L1959 845L1959 884L1902 884Z" stroke-width="1"/>
<path d="M2162 857L2229 860L2229 913L2162 911Z"/>
<path d="M2351 715L2355 938" stroke-width="2.5"/>
<path d="M2361 732L2417 732L2417 938L2361 938ZM2361 813L2417 813"/>
<path d="M2190 740L2260 740M2280 720L2300 700"/>
</g>
<!-- darker bodies -->
<path d="M1866 713L1929 713L1929 775Q1897 790 1866 775Z" fill="#187033"/>
<ellipse cx="1897" cy="713" rx="31" ry="23" fill="#15d955" stroke="#0f3a1c" stroke-width="1.5"/>
<path d="M1692 722L1714 722L1714 745L1692 745ZM1723 722L1752 722L1752 748L1723 748Z" fill="#187033"/>
<ellipse cx="1703" cy="720" rx="11" ry="8" fill="#15d955" stroke="#0f3a1c"/>
<ellipse cx="1737" cy="720" rx="14" ry="9" fill="#15d955" stroke="#0f3a1c"/>
<path d="M1755 722L1772 722L1772 738L1755 738Z" fill="#187033"/><ellipse cx="1763" cy="720" rx="9" ry="7" fill="#15d955" stroke="#0f3a1c"/>
<path d="M1197 623L2388 663" stroke="#0f3a1c" stroke-width="1" opacity="0.7"/>
<path d="M1724 838L1757 838L1757 865L1724 865Z" fill="#187033"/><path d="M1700 820L1712 820L1712 836L1700 836Z" fill="#187033"/>
<ellipse cx="1715" cy="815" rx="17" ry="16" fill="#15d955" stroke="#0f3a1c"/>
<ellipse cx="1742" cy="830" rx="18" ry="16" fill="#15d955" stroke="#0f3a1c"/>
<path d="M2003 774L2110 777L2110 810L2003 806Z" fill="#13a843" stroke="#0f3a1c"/>
<path d="M2118 808L2138 808L2138 826L2118 826ZM2150 808L2172 808L2172 826L2150 826Z" fill="#187033"/>
<ellipse cx="2128" cy="805" rx="11" ry="10" fill="#15d955" stroke="#0f3a1c"/>
<ellipse cx="2161" cy="805" rx="11" ry="10" fill="#15d955" stroke="#0f3a1c"/>
<path d="M2277 805L2331 796L2331 816L2290 830Z" fill="#177a35"/>
<path d="M1807 838L1836 838L1836 860L1807 860Z" fill="#187033"/>
<ellipse cx="1821" cy="835" rx="15" ry="13" fill="#15d955" stroke="#0f3a1c"/>
<path d="M2243 877L2294 880L2294 914L2243 911Z" fill="#13c04b" stroke="#0f3a1c"/>
<path d="M1205 858L1236 858L1236 868L1205 868Z" fill="#12b044"/>
<path d="M2250 945L2300 948L2330 958L2360 950L2420 955L2440 975L2380 978L2320 972L2280 975L2255 968Z" fill="#17c24f"/>
</svg></div>
<div class="a" style="left:2389px;top:1557px;width:2px;height:7px;background:#fff"></div><div class="a" style="left:2389px;top:1560px;width:91px;height:2px;background:#fff"></div>
<div id="redbox" class="a"></div>
</body></html>
